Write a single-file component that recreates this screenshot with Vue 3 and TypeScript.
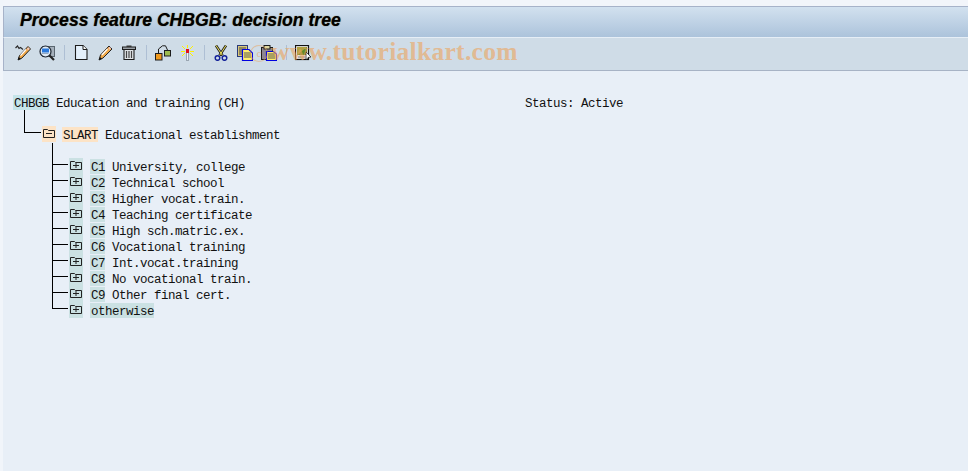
<script setup lang="ts">
interface Leaf {
  key: string;
  text: string;
}

const leaves: Leaf[] = [
  { key: 'C1', text: 'University, college' },
  { key: 'C2', text: 'Technical school' },
  { key: 'C3', text: 'Higher vocat.train.' },
  { key: 'C4', text: 'Teaching certificate' },
  { key: 'C5', text: 'High sch.matric.ex.' },
  { key: 'C6', text: 'Vocational training' },
  { key: 'C7', text: 'Int.vocat.training' },
  { key: 'C8', text: 'No vocational train.' },
  { key: 'C9', text: 'Other final cert.' },
];
</script>

<template>
  <div class="window">
    <div class="top-strip"></div>
    <div class="title-bar"><h1>Process feature CHBGB: decision tree</h1></div>
    <div class="toolbar">
      <!-- display / change -->
      <svg class="ico" viewBox="0 0 16 16">
        <path d="M0.5 3 L2.5 1 L4 3.5 L5.5 2.5 L8 4.5" fill="none" stroke="#2b2b2b" stroke-width="1.2"/>
        <path d="M13 1.5 L15.5 4 L7 13 L3 15 L4.5 10.5 Z" fill="#f0a848" stroke="#222" stroke-width="1"/>
        <path d="M12.5 3 L14 4.5" stroke="#f4c8c0" stroke-width="2"/>
        <path d="M11 4.5 L5.5 10.5" stroke="#fff" stroke-width="1.2"/>
        <path d="M3 15 L3.8 12 L6 14 Z" fill="#111"/>
      </svg>
      <!-- overview -->
      <svg class="ico" viewBox="0 0 16 16">
        <rect x="3.5" y="1.5" width="12" height="10" fill="#a5b0bb" stroke="#5a6670"/>
        <circle cx="6.5" cy="6.5" r="5.5" fill="#dfeaf5" stroke="#1d2530" stroke-width="1.2"/>
        <rect x="3" y="3.5" width="7" height="4" fill="#2b79dc"/>
        <rect x="2.5" y="8" width="7" height="1" fill="#94a8c0"/>
        <path d="M10.5 10.5 L15 15" stroke="#222" stroke-width="2.2"/>
      </svg>
      <span class="sep"></span>
      <!-- new -->
      <svg class="ico" viewBox="0 0 16 16">
        <path d="M2.5 0.5 H10 L14 4.5 V14.5 H2.5 Z" fill="#e4f0fb" stroke="#1c1c1c" stroke-width="1.1"/>
        <path d="M10 0.5 V4.5 H14" fill="#fff" stroke="#1c1c1c"/>
      </svg>
      <!-- pencil -->
      <svg class="ico" viewBox="0 0 16 16">
        <path d="M12 1 L15 4 L6 13 L2 15 L3.5 10 Z" fill="#f0a848" stroke="#222"/>
        <path d="M12 2.5 L13.5 4" stroke="#f4c8c0" stroke-width="2"/>
        <path d="M10.5 4 L4.8 10" stroke="#fff" stroke-width="1.2"/>
        <path d="M2 15 L3 12 L5 14 Z" fill="#111"/>
      </svg>
      <!-- trash -->
      <svg class="ico" viewBox="0 0 16 16">
        <rect x="1.5" y="2" width="13" height="2.5" fill="#9aa0a6" stroke="#1c1c1c"/>
        <rect x="5.5" y="0.5" width="5" height="1.5" fill="#333"/>
        <path d="M3 4.5 H13 V14.5 H3 Z" fill="#e0e4e7" stroke="#1c1c1c" stroke-width="1.1"/>
        <path d="M5.5 6 V13 M8 6 V13 M10.5 6 V13" stroke="#444" stroke-width="1.2"/>
      </svg>
      <span class="sep"></span>
      <!-- hierarchy -->
      <svg class="ico" viewBox="0 0 16 16">
        <rect x="0.5" y="8.5" width="6.5" height="6.5" fill="#f09a1e" stroke="#1c1c1c"/>
        <rect x="9.5" y="5.5" width="6" height="5.5" fill="#9dbb4e" stroke="#1c1c1c"/>
        <path d="M3.5 8 V4 L7.5 0.8 L10.5 0.8 L12.5 5" fill="none" stroke="#1c1c1c"/>
      </svg>
      <!-- wand -->
      <svg class="ico crisp" viewBox="0 0 16 16">
        <rect x="7" y="8" width="3" height="8" fill="#9aa6b2"/>
        <rect x="8" y="8" width="1" height="7" fill="#eef2f5"/>
        <rect x="7" y="4" width="3" height="4" fill="#e0101c"/>
        <path d="M8.5 0 V3 M2 6 H6 M11 6 H15" stroke="#fff200" fill="none"/>
        <path d="M3 1 H4 V2 H5 V3 H6 V4 H5 V3 H4 V2 H3 Z M14 1 H13 V2 H12 V3 H11 V4 H12 V3 H13 V2 H14 Z" fill="#fff200"/>
        <path d="M5 8 H6 V9 H5 V10 H4 V11 H3 V10 H4 V9 H5 Z M12 8 H11 V9 H12 V10 H13 V11 H14 V10 H13 V9 H12 Z" fill="#fff200"/>
      </svg>
      <span class="sep"></span>
      <!-- scissors -->
      <svg class="ico" viewBox="0 0 16 16">
        <path d="M3 0.5 L9.5 10.5 M13 0.5 L6.5 10.5" stroke="#222" stroke-width="2.6"/>
        <path d="M3 0.5 L9.5 10.5 M13 0.5 L6.5 10.5" stroke="#f6e85a" stroke-width="1"/>
        <circle cx="4.5" cy="13" r="2.3" fill="none" stroke="#14229a" stroke-width="1.5"/>
        <circle cx="11.5" cy="13" r="2.3" fill="none" stroke="#14229a" stroke-width="1.5"/>
      </svg>
      <!-- copy -->
      <svg class="ico" viewBox="0 0 16 16">
        <rect x="0.5" y="0.5" width="10" height="11" fill="#d8c67a" stroke="#2a3a7a"/>
        <path d="M2 3 H9 M2 5 H5 M2 7 H5 M2 9 H5" stroke="#444"/>
        <path d="M5.5 4.5 H12 L15.5 8 V15.5 H5.5 Z" fill="#ffec6e" stroke="#0000e0" stroke-width="1.2"/>
        <path d="M7 8 H14 M7 10 H14 M7 12 H14" stroke="#555"/>
      </svg>
      <!-- paste -->
      <svg class="ico" viewBox="0 0 16 16">
        <rect x="0.5" y="2.5" width="11" height="12" fill="#8e8690" stroke="#1c1c1c"/>
        <rect x="3" y="0.5" width="6" height="3.5" fill="#e0d8a0" stroke="#1c1c1c"/>
        <path d="M5.5 6.5 H12.5 L15.5 9 V15.5 H5.5 Z" fill="#ffec6e" stroke="#0000e0" stroke-width="1.2"/>
        <path d="M7 9 H14 M7 11 H14 M7 13 H14" stroke="#555"/>
      </svg>
      <span class="sep"></span>
      <!-- layout -->
      <svg class="ico" viewBox="0 0 16 16">
        <rect x="0.5" y="0.5" width="13" height="14" fill="#ece9e2" stroke="#111" stroke-width="1.2"/>
        <rect x="2" y="2" width="10" height="8" fill="#5f8a2a"/>
        <path d="M2 2 H12 L2 10 Z" fill="#b0a040"/>
        <path d="M3 12 H10" stroke="#777"/>
        <path d="M11 7 L16 12 L13 12.5 L11 15 Z" fill="#fff" stroke="#111" stroke-width="0.7"/>
      </svg>
      <div class="watermark"><span class="copy">c</span>www.tutorialkart.com</div>
    </div>

    <div class="tree">
      <div class="root">
        <div class="row">
          <span class="hl hl-teal-root">CHBGB</span>&nbsp;Education and training (CH)
        </div>
        <div class="row">Status: Active</div>
      </div>

      <div class="row branch">
        <span class="folder-cell orange">
          <svg class="folder" viewBox="0 0 12 10">
            <path d="M0.5 9.5 V1.5 H4.5 L5.5 2.5 H11.5 V9.5 Z" fill="none" stroke="#222"/>
            <path d="M3 5.5 H9" stroke="#222"/>
          </svg>
        </span>
        <span class="hl orange">SLART</span>&nbsp;Educational establishment
      </div>

      <div class="leaves">
        <div v-for="leaf in leaves" :key="leaf.key" class="row leaf">
          <span class="folder-cell teal">
            <svg class="folder" viewBox="0 0 12 10">
              <path d="M0.5 9.5 V1.5 H4.5 L5.5 2.5 H11.5 V9.5 Z" fill="none" stroke="#222"/>
              <path d="M3 5.5 H9 M6 3 V8" stroke="#222"/>
            </svg>
          </span>
          <span class="hl teal">{{ leaf.key }}</span>&nbsp;{{ leaf.text }}
        </div>
        <div class="row leaf">
          <span class="folder-cell teal">
            <svg class="folder" viewBox="0 0 12 10">
              <path d="M0.5 9.5 V1.5 H4.5 L5.5 2.5 H11.5 V9.5 Z" fill="none" stroke="#222"/>
              <path d="M3 5.5 H9 M6 3 V8" stroke="#222"/>
            </svg>
          </span>
          <span class="hl teal">otherwise</span>
        </div>
      </div>
    </div>
  </div>
</template>

<style>
html, body {
  margin: 0;
  background: #e8eff7;
}
</style>

<style scoped>
.window {
  width: 968px;
  height: 471px;
  overflow: hidden;
  box-sizing: border-box;
  background: #e8eff7;
  border-left: 3px solid #f1f5fa;
  position: relative;
}
.top-strip {
  height: 7px;
  box-sizing: border-box;
  background: #f2f5fa;
  margin-left: -3px;
  border-bottom: 1px solid #a7b3c9;
}
.title-bar {
  height: 30px;
  box-sizing: border-box;
  background: linear-gradient(#d2e1ef, #acc3db);
  border-left: 1px solid #a7b3c9;
  display: flex;
  align-items: center;
  padding: 0 0 3px 16px;
}
h1 {
  margin: 0;
  font: italic bold 17.6px "Liberation Sans", Arial, sans-serif;
  color: #000;
  text-shadow: 0 0 1px #5b4a20;
}
.toolbar {
  position: relative;
  height: 34px;
  box-sizing: border-box;
  background: #cfdce7;
  border-top: 1px solid #e6eef6;
  border-bottom: 1px solid #a7b3c5;
  border-left: 1px solid #a7b3c9;
  display: flex;
  align-items: center;
  gap: 8px;
  padding: 0 0 3px 11px;
}
.ico {
  width: 16px;
  height: 16px;
  flex: none;
}
.crisp {
  shape-rendering: crispEdges;
}
.sep {
  width: 1px;
  height: 15px;
  margin-left: 1px;
  background: #aebfd4;
}
.watermark {
  position: absolute;
  left: 246px;
  top: -1px;
  font: bold 25.5px "Liberation Serif", serif;
  letter-spacing: 0.3px;
  color: rgba(236, 163, 92, 0.62);
  line-height: 29px;
  white-space: nowrap;
}
.copy {
  display: inline-block;
  width: 16px;
  font-size: 11px;
  line-height: 15px;
  text-align: center;
  border: 1px solid rgba(236, 163, 92, 0.5);
  border-radius: 50%;
  font-weight: normal;
  margin-right: 3px;
  vertical-align: 3px;
}
.tree {
  padding: 24px 0 0 10px;
  font: 12.5px/18px "Liberation Mono", "Courier New", monospace;
  letter-spacing: -0.5px;
  color: #111;
  white-space: pre;
}
.root {
  display: grid;
  grid-template-columns: 512px 1fr;
}
.row {
  display: flex;
  height: 16px;
  align-items: flex-start;
}
.hl {
  padding-left: 1px;
  height: 15px;
  align-self: flex-start;
}
.hl-teal-root {
  background: #c5e4e9;
}
.branch {
  position: relative;
  margin: 16px 0 0 29px;
}
.branch::before {
  content: "";
  position: absolute;
  left: -18px;
  top: -17px;
  width: 17px;
  height: 23px;
  box-sizing: border-box;
  border-left: 1px solid #000;
  border-bottom: 1px solid #000;
}
.folder-cell {
  width: 14px;
  height: 16px;
  flex: none;
  display: flex;
  justify-content: center;
  align-items: flex-start;
  margin: -1px 6px 0 0;
  padding-top: 2px;
  box-sizing: border-box;
}
.orange {
  background: #fce3c6;
}
.teal {
  background: #cbe1e3;
}
.folder {
  width: 12px;
  height: 10px;
}
.leaves {
  margin: 16px 0 0 56px;
}
.leaf {
  position: relative;
}
.leaf .folder-cell {
  margin-right: 7px;
}
.leaf::before {
  content: "";
  position: absolute;
  left: -17px;
  top: -10px;
  width: 16px;
  height: 16px;
  box-sizing: border-box;
  border-left: 1px solid #000;
  border-bottom: 1px solid #000;
}
.leaf:first-child::before {
  top: -16px;
  height: 22px;
}
</style>
